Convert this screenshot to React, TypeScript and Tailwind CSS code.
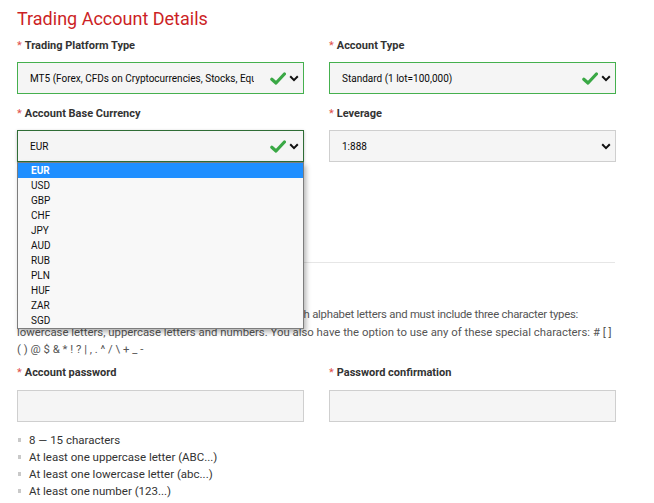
import React from 'react';

const CURRENCIES = ['EUR', 'USD', 'GBP', 'CHF', 'JPY', 'AUD', 'RUB', 'PLN', 'HUF', 'ZAR', 'SGD'];

const RULES = [
  '8 — 15 characters',
  'At least one uppercase letter (ABC...)',
  'At least one lowercase letter (abc...)',
  'At least one number (123...)',
];

const Check = () => (
  <svg width="16" height="13" viewBox="0 0 16 13" className="shrink-0">
    <path d="M1.8 7.2 L6 11 L14.4 2" fill="none" stroke="#3aa845" strokeWidth="3.2" strokeLinecap="round" strokeLinejoin="round" />
  </svg>
);

const Chevron = () => (
  <svg width="10" height="7" viewBox="0 0 10 7" className="shrink-0">
    <path d="M1.2 1.3 L5 5.1 L8.8 1.3" fill="none" stroke="#111" strokeWidth="2" />
  </svg>
);

function Label({ text }: { text: string }) {
  return (
    <div className="h-[16px] leading-[16px] text-[11px] font-bold text-[#333] whitespace-nowrap">
      <span className="text-[#e0504a] font-normal mr-[3px]">*</span>
      {text}
    </div>
  );
}

function SelectBox({ value, valid, focused }: { value: string; valid?: boolean; focused?: boolean }) {
  const border = focused ? 'border-[#2f6d36] shadow-[0_1px_3px_rgba(0,0,0,0.25)]' : valid ? 'border-[#45b04e]' : 'border-[#cfcfcf]';
  return (
    <div className={`h-[32px] mt-[8px] border ${border} bg-[#f5f5f5] flex items-center pl-[12px] pr-[4px]`}>
      <span className="flex-1 overflow-hidden whitespace-nowrap text-[10px] text-[#0a0a0a] mr-[16px]">{value}</span>
      {valid && <Check />}
      <span className="ml-[3px] flex items-center"><Chevron /></span>
    </div>
  );
}

export default function App() {
  return (
    <div className="w-[654px] h-[503px] overflow-hidden bg-white px-[17px] pt-[6px]" style={{ fontFamily: 'Roboto, "Liberation Sans", sans-serif' }}>
      <h1 className="text-[18px] leading-[26px] text-[#cc1f26]">Trading Account Details</h1>

      <div className="grid grid-cols-[287px_287px] gap-x-[25px] mt-[6px]">
        <div>
          <Label text="Trading Platform Type" />
          <SelectBox value="MT5 (Forex, CFDs on Cryptocurrencies, Stocks, Equities, Indices, Commodities)" valid />
        </div>
        <div>
          <Label text="Account Type" />
          <SelectBox value="Standard (1 lot=100,000)" valid />
        </div>

        <div className="mt-[12px] relative z-10">
          <Label text="Account Base Currency" />
          <SelectBox value="EUR" valid focused />
          <ul className="absolute left-0 top-full w-full bg-[#f8f8f8] border border-[#7d7d7d] shadow-[2px_3px_5px_rgba(0,0,0,0.3)]">
            {CURRENCIES.map((c, i) => (
              <li
                key={c}
                className={`h-[15px] leading-[15px] pl-[13px] text-[10px] ${i === 0 ? 'bg-[#1f8fff] text-white font-bold' : 'text-[#111]'}`}
              >
                {c}
              </li>
            ))}
          </ul>
        </div>
        <div className="mt-[12px]">
          <Label text="Leverage" />
          <SelectBox value="1:888" />
        </div>
      </div>

      <div className="w-[598px] mt-[100px] border-t border-[#e6e6e6]" />

      <h2 className="text-[18px] leading-[24px] text-[#cc1f26] mt-[14px] mb-[5px] whitespace-nowrap">Account Password</h2>
      <div className="text-[11.35px] leading-[17.5px] text-[#555] whitespace-nowrap">
        <div className="tracking-[-0.25px]">
          <span className="[word-spacing:-1px]">The password must be 8-15 characters long, using only Englis</span>h alphabet letters and must include three character types:
        </div>
        <div>lowercase letters, uppercase letters and numbers. You also have the option to use any of these special characters: # [ ]</div>
        <div>( ) @ $ &amp; * ! ? | , . ^ / \ + _ -</div>
      </div>

      <div className="grid grid-cols-[287px_287px] gap-x-[25px] mt-[6px]">
        <div>
          <Label text="Account password" />
          <div className="h-[32px] mt-[9px] border border-[#cfcfcf] bg-[#f5f5f5]" />
        </div>
        <div>
          <Label text="Password confirmation" />
          <div className="h-[32px] mt-[9px] border border-[#cfcfcf] bg-[#f5f5f5]" />
        </div>
      </div>

      <ul className="mt-[10px]">
        {RULES.map(r => (
          <li key={r} className="h-[17px] leading-[17px] flex items-center text-[11.5px] text-[#333]">
            <span className="w-[3px] h-[4px] bg-[#c9c9c9] ml-[1px] mr-[8px]" />
            {r}
          </li>
        ))}
      </ul>
    </div>
  );
}
